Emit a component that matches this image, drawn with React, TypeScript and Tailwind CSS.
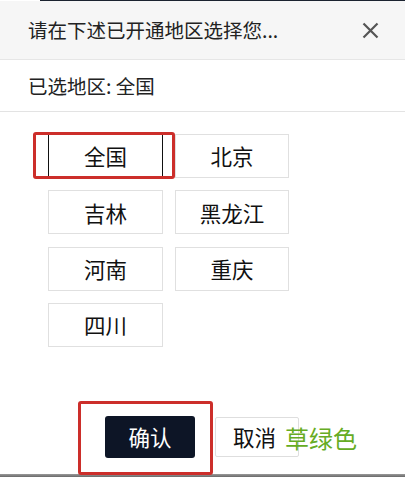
import React from "react";

const regions = ["全国", "北京", "吉林", "黑龙江", "河南", "重庆", "四川"];

export default function App() {
  return (
    <div
      className="w-[405px] h-[477px] bg-white flex flex-col overflow-hidden text-[#1a1a1a]"
      style={{ fontFamily: '"Noto Sans CJK SC", "Noto Sans", sans-serif' }}
    >
      <div className="h-px bg-[#1b2330] ml-[40px]" />
      <div className="h-[59px] bg-[#f6f6f6] border-b border-[#e6e6e6] flex items-center justify-between pl-[28px] pr-[26px]">
        <span className="text-[19.5px] leading-none text-[#222]">请在下述已开通地区选择您...</span>
        <svg width="17" height="17" viewBox="0 0 17 17" className="mt-[1px]">
          <path d="M1.5 1.5 L15.5 15.5 M15.5 1.5 L1.5 15.5" stroke="#555" strokeWidth="2.2" strokeLinecap="butt" />
        </svg>
      </div>
      <div className="h-[52px] border-b border-[#e3e3e3] flex items-center pl-[28px]">
        <span className="text-[19.5px] leading-none text-[#222]">已选地区: 全国</span>
      </div>
      <div className="pl-[48px] pt-[22px] grid grid-cols-[115px_114px] gap-x-[12px] gap-y-[12.3px] w-max">
        {regions.map((r, i) => (
          <div key={r} className="relative">
            <div
              className={
                "h-[44px] flex items-center justify-center text-[21.5px] leading-none text-[#111] bg-white " +
                (i === 0
                  ? "border-x border-x-[#111] border-y border-y-[#dcdcdc]"
                  : "border border-[#e0e0e0]")
              }
            >
              {r}
            </div>
            {i === 0 && (
              <div className="absolute left-[-15px] top-[-2px] right-[-12px] bottom-[-1px] border-[3px] border-[#cc2e2a] rounded-[3px] pointer-events-none" />
            )}
          </div>
        ))}
      </div>
      <div className="flex-1" />
      <div className="relative flex items-center pl-[105px] gap-[20px] pb-[16px]">
        <div className="w-[90px] h-[42px] bg-[#0d1526] rounded-[3px] flex items-center justify-center text-white text-[21.5px] leading-none">
          确认
        </div>
        <div className="w-[84px] h-[40px] border border-[#dedede] rounded-[2px] flex items-center justify-start pl-[17px] text-[21.5px] leading-none text-[#111]">
          取消
        </div>
        <span className="absolute left-[285px] top-[10px] text-[24px] leading-none text-[#66ac23]">草绿色</span>
        <div className="absolute left-[78px] top-[-15px] w-[135px] h-[74px] border-[3px] border-[#cc2e2a] rounded-[3px] pointer-events-none" />
      </div>
      <div className="h-[3px] bg-gradient-to-b from-[#9a9a9a] to-[#6a6a6a]" />
    </div>
  );
}
